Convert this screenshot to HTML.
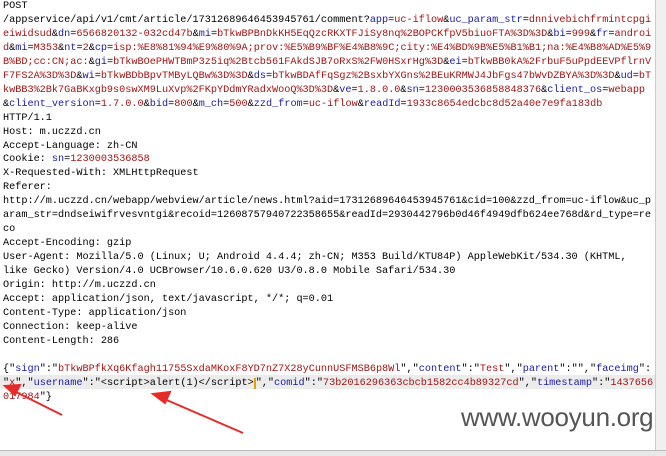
<!DOCTYPE html>
<html><head><meta charset="utf-8"><style>
html,body{margin:0;padding:0;width:666px;height:456px;overflow:hidden;background:#fff;position:relative}
pre{position:absolute;left:3px;top:0px;margin:0;font-family:"Liberation Mono","Noto Sans CJK SC",monospace;font-size:10.2px;line-height:13.95px;color:#000;white-space:pre}
.b{color:#1a1aa6}.r{color:#a31515}
.hl{position:absolute;left:0;top:375px;width:655px;height:14px;background:#ececec}
.sb{position:absolute;left:655px;top:0;width:11px;height:450px;background:#f0f0f0;border-left:1px solid #ccc}
.sb2{position:absolute;left:0;top:450px;width:666px;height:6px;background:#e8e8e8;border-top:1px solid #bbb}
.wm{position:absolute;left:461px;top:402px;font-family:"Liberation Sans",sans-serif;font-size:26px;color:#555;letter-spacing:-0.3px}
</style></head><body>
<div class="hl"></div>
<pre>POST
/appservice/api/v1/cmt/article/17312689646453945761/comment?<span class="b">app</span>=<span class="r">uc-iflow</span>&amp;<span class="b">uc_param_str</span>=<span class="r">dnnivebichfrmintcpgi</span>
<span class="r">eiwidsud</span>&amp;<span class="b">dn</span>=<span class="r">6566820132-032cd47b</span>&amp;<span class="b">mi</span>=<span class="r">bTkwBPBnDkKH5EqQzcRKXTFJiSy8nq%2BOPCKfpV5biuoFTA%3D%3D</span>&amp;<span class="b">bi</span>=<span class="r">999</span>&amp;<span class="b">fr</span>=<span class="r">androi</span>
<span class="r">d</span>&amp;<span class="b">mi</span>=<span class="r">M353</span>&amp;<span class="b">nt</span>=<span class="r">2</span>&amp;<span class="b">cp</span>=<span class="r">isp:%E8%81%94%E9%80%9A;prov:%E5%B9%BF%E4%B8%9C;city:%E4%BD%9B%E5%B1%B1;na:%E4%B8%AD%E5%9</span>
<span class="r">B%BD;cc:CN;ac:</span>&amp;<span class="b">gi</span>=<span class="r">bTkwBOePHWTBmP3z5iq%2Btcb561FAkdSJB7oRxS%2FW0HSxrHg%3D</span>&amp;<span class="b">ei</span>=<span class="r">bTkwBB0kA%2FrbuF5uPpdEEVPflrnV</span>
<span class="r">F7FS2A%3D%3D</span>&amp;<span class="b">wi</span>=<span class="r">bTkwBDbBpvTMByLQBw%3D%3D</span>&amp;<span class="b">ds</span>=<span class="r">bTkwBDAfFqSgz%2BsxbYXGns%2BEuKRMWJ4JbFgs47bWvDZBYA%3D%3D</span>&amp;<span class="b">ud</span>=<span class="r">bT</span>
<span class="r">kwBB3%2Bk7GaBKxgb9s0swXM9LuXvp%2FKpYDdmYRadxWooQ%3D%3D</span>&amp;<span class="b">ve</span>=<span class="r">1.8.0.0</span>&amp;<span class="b">sn</span>=<span class="r">1230003536858848376</span>&amp;<span class="b">client_os</span>=<span class="r">webapp</span>
&amp;<span class="b">client_version</span>=<span class="r">1.7.0.0</span>&amp;<span class="b">bid</span>=<span class="r">800</span>&amp;<span class="b">m_ch</span>=<span class="r">500</span>&amp;<span class="b">zzd_from</span>=<span class="r">uc-iflow</span>&amp;<span class="b">readId</span>=<span class="r">1933c8654edcbc8d52a40e7e9fa183db</span>
HTTP/1.1
Host: m.uczzd.cn
Accept-Language: zh-CN
Cookie: <span class="b">sn</span>=<span class="r">1230003536858</span>
X-Requested-With: XMLHttpRequest
Referer:
http://m.uczzd.cn/webapp/webview/article/news.html?aid=17312689646453945761&amp;cid=100&amp;zzd_from=uc-iflow&amp;uc_p
aram_str=dndseiwifrvesvntgi&amp;recoid=12608757940722358655&amp;readId=2930442796b0d46f4949dfb624ee768d&amp;rd_type=re
co
Accept-Encoding: gzip
User-Agent: Mozilla/5.0 (Linux; U; Android 4.4.4; zh-CN; M353 Build/KTU84P) AppleWebKit/534.30 (KHTML,
like Gecko) Version/4.0 UCBrowser/10.6.0.620 U3/0.8.0 Mobile Safari/534.30
Origin: http://m.uczzd.cn
Accept: application/json, text/javascript, */*; q=0.01
Content-Type: application/json
Connection: keep-alive
Content-Length: 286

{"<span class="b">sign</span>":"<span class="r">bTkwBPfkXq6Kfagh11755SxdaMKoxF8YD7nZ7X28yCunnUSFMSB6p8Wl</span>","<span class="b">content</span>":"<span class="r">Test</span>","<span class="b">parent</span>":"","<span class="b">faceimg</span>":
"<span class="r">x</span>","<span class="b">username</span>":"&lt;script&gt;alert(1)&lt;/script&gt;<span style="border-left:2px solid #e8a000"></span>","<span class="b">comid</span>":"<span class="r">73b2016296363cbcb1582cc4b89327cd</span>","<span class="b">timestamp</span>":"<span class="r">1437656</span>
<span class="r">017984</span>"}</pre>
<svg style="position:absolute;left:0;top:0" width="666" height="456">
<g stroke="#e82a2a" stroke-width="2" fill="#e82a2a">
<line x1="62" y1="415" x2="12" y2="390"/><polygon points="5,386 20,385 15,395"/>
<line x1="243" y1="433" x2="162" y2="398"/><polygon points="153,394 170,392 165,403"/>
</g></svg>
<div class="wm">www.wooyun.org</div>
<div class="sb"></div>
<div class="sb2"></div>
</body></html>
